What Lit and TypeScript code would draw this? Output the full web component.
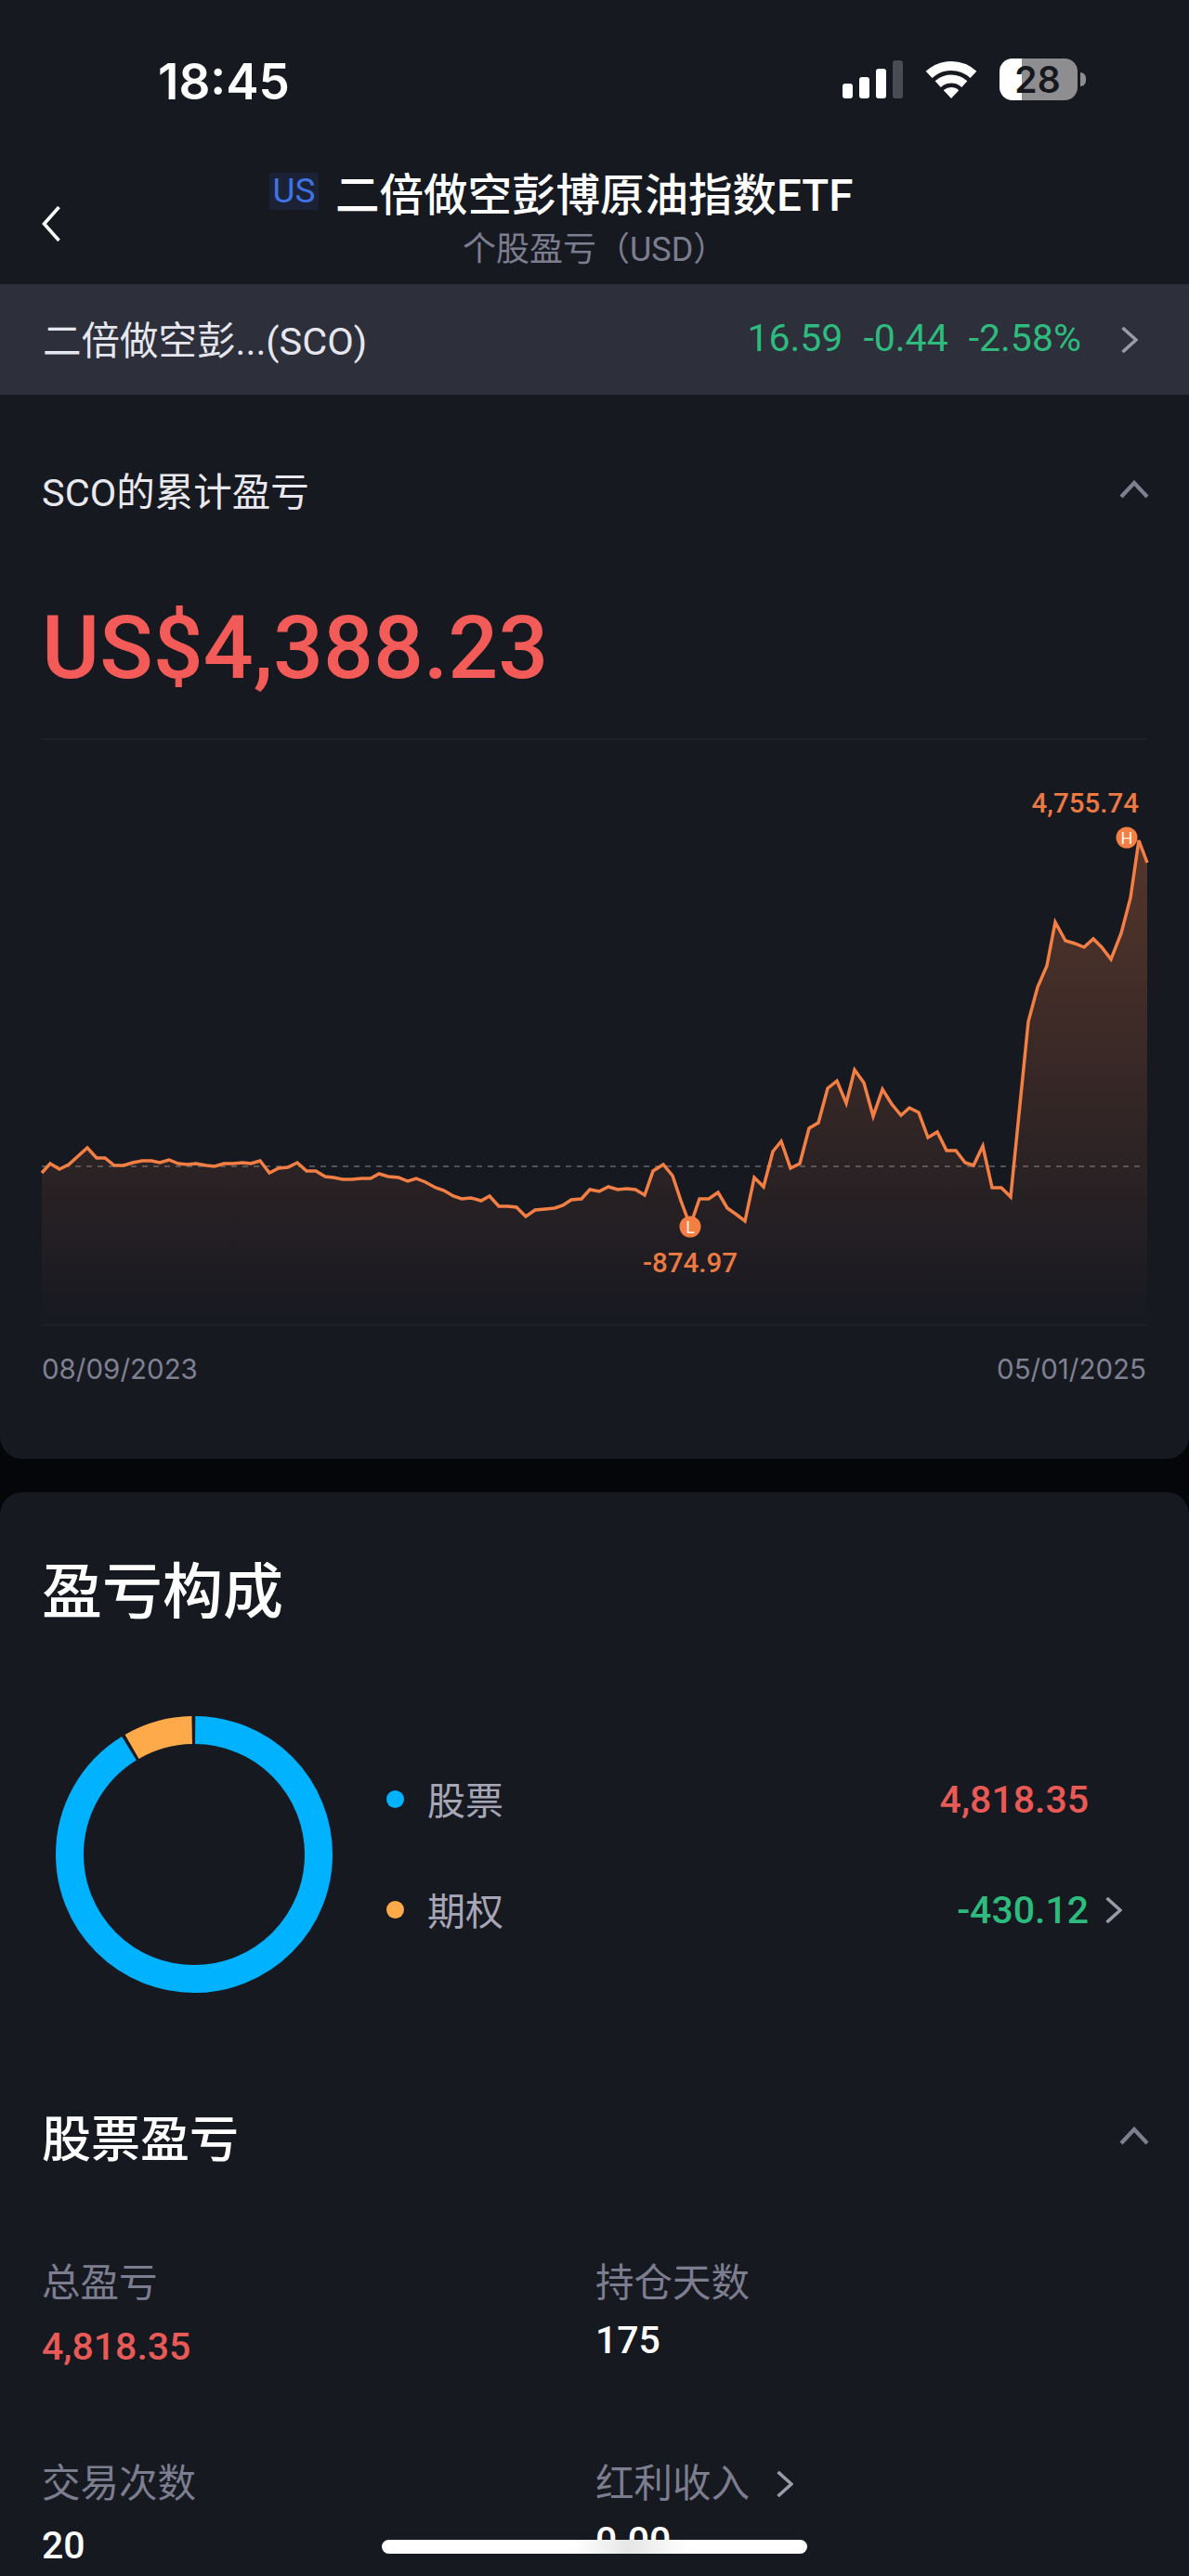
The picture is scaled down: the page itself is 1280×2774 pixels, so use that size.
import { css, html, LitElement, svg } from "lit";
import { customElement } from "lit/decorators.js";

// chart samples, in page pixels
const LINE: [number, number][] = [
  [45, 1263], [54, 1253], [64, 1259], [74, 1254], [94, 1236], [104, 1247], [113, 1247], [123, 1255],
  [133, 1255], [143, 1252], [153, 1250], [163, 1250], [172, 1252], [182, 1249], [192, 1253], [202, 1254],
  [211, 1253], [222, 1255], [231, 1256], [241, 1253], [251, 1253], [261, 1252], [270, 1253], [280, 1250],
  [290, 1263], [300, 1258], [310, 1257], [320, 1252], [330, 1261], [340, 1261], [350, 1267], [359, 1268],
  [369, 1270], [379, 1270], [389, 1269], [399, 1269], [408, 1264], [418, 1267], [429, 1268], [439, 1272],
  [448, 1269], [458, 1273], [469, 1279], [478, 1282], [488, 1288], [497, 1291], [507, 1290], [518, 1293],
  [527, 1288], [537, 1299], [547, 1299], [556, 1300], [566, 1310], [576, 1303], [587, 1302], [597, 1301],
  [606, 1298], [615, 1292], [626, 1291], [635, 1281], [645, 1283], [655, 1278], [665, 1281], [675, 1280],
  [684, 1281], [694, 1287], [703, 1261], [714, 1254], [724, 1266], [733, 1293], [743, 1320], [753, 1291],
  [763, 1291], [773, 1284], [783, 1301], [793, 1308], [802, 1315], [812, 1268], [822, 1278], [832, 1240],
  [841, 1229], [851, 1258], [861, 1253], [871, 1215], [881, 1209], [891, 1172], [901, 1164], [911, 1188],
  [920, 1152], [930, 1166], [940, 1202], [950, 1173], [960, 1189], [970, 1201], [979, 1193], [989, 1198],
  [999, 1225], [1009, 1219], [1019, 1239], [1029, 1239], [1039, 1252], [1048, 1255], [1058, 1234],
  [1068, 1279], [1078, 1279], [1088, 1289], [1102, 1150], [1107, 1100], [1117, 1063], [1127, 1040],
  [1136, 993], [1147, 1013], [1157, 1016], [1167, 1020], [1177, 1011], [1186, 1020], [1196, 1033],
  [1207, 1005], [1217, 967], [1226, 905], [1235, 929],
];

const linePoints = LINE.map(([x, y]) => `${x},${y}`).join(" ");
const areaPoints = `45,1427 ${linePoints} 1235,1427`;

const chevronRight = svg`<svg class="chev-right" viewBox="0 0 18 28"><path d="M1.5 1 16 14 1.5 27"></path></svg>`;
const chevronUp = svg`<svg class="chev-up" viewBox="0 0 32 20"><path d="M2 18 16 3 30 18"></path></svg>`;

@customElement("app-root")
export class AppRoot extends LitElement {
  static styles = css`
    * {
      box-sizing: border-box;
      margin: 0;
      padding: 0;
    }

    :host {
      display: block;
      position: relative;
      width: 1280px;
      height: 2774px;
      overflow: hidden;
      background: linear-gradient(#0c0d11, #050609 40px);
      font-family: Roboto, "Noto Sans CJK SC", sans-serif;
      color: #fff;
    }

    svg {
      display: block;
    }

    .chev-right {
      width: 18px;
      height: 28px;
      flex: none;
    }

    .chev-right path {
      fill: none;
      stroke: #9a9aa8;
      stroke-width: 3.6;
    }

    .chev-up {
      width: 32px;
      height: 20px;
      flex: none;
    }

    .chev-up path {
      fill: none;
      stroke: #7f808f;
      stroke-width: 4.2;
    }

    .top {
      background: #171921;
    }

    .status {
      height: 176px;
      padding: 63px 111px 0 170px;
      display: flex;
      align-items: flex-start;
      justify-content: space-between;
    }

    .time {
      font-family: Inter, sans-serif;
      font-weight: 600;
      font-size: 53px;
      line-height: 50px;
    }

    .status-icons {
      display: flex;
      align-items: flex-end;
      height: 45px;
    }

    .signal {
      display: flex;
      align-items: flex-end;
      gap: 7px;
      height: 41px;
      margin-bottom: 2px;
    }

    .signal i {
      display: block;
      width: 11px;
      background: #fff;
      border-radius: 3px;
    }

    .signal i.off {
      background: #4a4b55;
    }

    .wifi {
      width: 58px;
      height: 43px;
      margin-left: 23px;
      margin-bottom: 1px;
    }

    .battery {
      width: 84px;
      height: 45px;
      margin-left: 23px;
      border-radius: 14px;
      background: linear-gradient(90deg, #fff 24px, #8e8e90 24px);
      color: #17181d;
      font-family: Inter, sans-serif;
      font-weight: 600;
      font-size: 39px;
      line-height: 45px;
      text-align: center;
      padding-right: 2px;
    }

    .battery-cap {
      width: 6px;
      height: 15px;
      margin: 0 0 15px 3px;
      border-radius: 0 6px 6px 0;
      background: #8e8e90;
    }

    .nav {
      height: 130px;
      padding-left: 45px;
      display: flex;
    }

    .back {
      width: 20px;
      height: 38px;
      flex: none;
      margin-top: 46px;
    }

    .back path {
      fill: none;
      stroke: #fff;
      stroke-width: 3.6;
    }

    .nav-text {
      padding-top: 10px;
    }

    .title {
      display: flex;
      align-items: center;
      margin-left: 225px;
      height: 40px;
      font-size: 47.5px;
      font-weight: 500;
      white-space: nowrap;
    }

    .market {
      width: 53px;
      height: 40px;
      margin-right: 18px;
      background: #1b2236;
      color: #3f72e4;
      font-size: 37px;
      font-weight: 400;
      line-height: 40px;
      text-align: center;
    }

    .subtitle {
      margin: 23px 0 0 433px;
      font-size: 36px;
      line-height: 40px;
      color: #7c7d8f;
      white-space: nowrap;
    }

    .quote {
      height: 119px;
      padding: 0 55px 3px 46px;
      display: flex;
      align-items: center;
      background: #2d2f3a;
      font-size: 41.5px;
      color: #e6e6ee;
    }

    .quote-name {
      flex: 1;
    }

    .quote-values {
      display: flex;
      gap: 22px;
      font-size: 41px;
      color: #2dbb7e;
    }

    .quote .chev-right {
      margin-left: 43px;
      margin-top: 3px;
    }

    .card {
      background: #171921;
    }

    .card-chart {
      height: 1146px;
      padding-top: 72px;
      border-radius: 0 0 24px 24px;
    }

    .head {
      display: flex;
      align-items: center;
      justify-content: space-between;
      height: 60px;
      padding: 0 43px 0 45px;
    }

    .head-label {
      font-size: 41.5px;
      color: #e8e8ee;
    }

    .amount {
      margin: 86px 0 0 45px;
      font-size: 95px;
      font-weight: 500;
      line-height: 110px;
      color: #f25b58;
      white-space: nowrap;
    }

    .chart {
      width: 1280px;
      height: 660px;
      margin-top: 37px;
    }

    .chart text {
      font-family: Roboto, sans-serif;
    }

    .extreme {
      font-size: 29.5px;
      font-weight: 500;
      fill: #ec7a42;
    }

    .pin {
      font-size: 18px;
      fill: #fff3e8;
    }

    .dates {
      display: flex;
      justify-content: space-between;
      margin-top: 4px;
      padding: 0 46px 0 45px;
      font-family: Inter, sans-serif;
      font-size: 29.5px;
      line-height: 40px;
      color: #7f8092;
    }

    .card-detail {
      margin-top: 36px;
      height: 1167px;
      padding-top: 68px;
      border-radius: 24px 24px 0 0;
    }

    .card-title {
      margin-left: 45px;
      font-size: 65px;
      font-weight: 500;
      line-height: 80px;
    }

    .breakdown {
      display: flex;
      align-items: center;
      margin-top: 93px;
      padding-left: 60px;
    }

    .donut {
      width: 298px;
      height: 298px;
      flex: none;
    }

    .legend {
      width: 792px;
      margin-left: 58px;
      display: flex;
      flex-direction: column;
      gap: 69px;
    }

    .legend-row {
      display: flex;
      align-items: center;
      height: 50px;
    }

    .dot {
      width: 19px;
      height: 19px;
      border-radius: 50%;
      margin-right: 25px;
    }

    .legend-label {
      flex: 1;
      padding-bottom: 4px;
      font-size: 41px;
      color: #a6a6b6;
    }

    .legend-value {
      font-size: 41px;
      font-weight: 500;
    }

    .legend-more {
      width: 36px;
      display: flex;
      justify-content: flex-end;
    }

    .loss {
      color: #e85a55;
    }

    .gain {
      color: #2dbb7e;
    }

    .section {
      margin-top: 124px;
    }

    .section-label {
      font-size: 53px;
      font-weight: 500;
    }

    .stats {
      display: grid;
      grid-template-columns: 596px 595px;
      grid-auto-rows: 216px;
      margin-top: 107px;
      padding-left: 45px;
    }

    .stat-label {
      display: flex;
      align-items: center;
      gap: 29px;
      font-size: 41.5px;
      line-height: 44px;
      color: #7c7d8f;
    }

    .stat-value {
      margin-top: 17px;
      font-size: 41px;
      font-weight: 500;
      line-height: 44px;
    }

    .stat-value.low {
      margin-top: 24px;
    }

    .stat-value.mid {
      margin-top: 22px;
    }

    .home-bar {
      position: absolute;
      left: 411px;
      top: 2735px;
      width: 458px;
      height: 15px;
      border-radius: 8px;
      background: linear-gradient(90deg, #fff 45%, #e6e6e6 58%, #fff 72%);
    }
  `;

  private _renderStatus() {
    return html`
      <div class="status">
        <div class="time">18:45</div>
        <div class="status-icons">
          <div class="signal">
            <i style="height:16px"></i>
            <i style="height:23px"></i>
            <i style="height:32px"></i>
            <i class="off" style="height:41px"></i>
          </div>
          <svg class="wifi" viewBox="0 0 58 43">
            <path d="M5.1 16.4A35 35 0 0 1 52.9 16.4" fill="none" stroke="#fff" stroke-width="10"></path>
            <path d="M14.7 26.6A21 21 0 0 1 43.3 26.6" fill="none" stroke="#fff" stroke-width="9"></path>
            <path d="M29 42 20.8 33.2A12 12 0 0 1 37.2 33.2Z" fill="#fff"></path>
          </svg>
          <div class="battery">28</div>
          <div class="battery-cap"></div>
        </div>
      </div>
    `;
  }

  private _renderChart() {
    return html`
      <svg class="chart" viewBox="0 790 1280 660">
        <defs>
          <linearGradient id="area" gradientUnits="userSpaceOnUse" x1="0" y1="905" x2="0" y2="1427">
            <stop offset="0" stop-color="#f47f45" stop-opacity="0.28"></stop>
            <stop offset="1" stop-color="#f47f45" stop-opacity="0"></stop>
          </linearGradient>
        </defs>
        <line x1="45" y1="796" x2="1235" y2="796" stroke="#1f2129" stroke-width="2"></line>
        <line x1="45" y1="1427" x2="1235" y2="1427" stroke="#1f2129" stroke-width="2"></line>
        <line x1="45" y1="1256" x2="1231" y2="1256" stroke="#62636f" stroke-width="1.5" stroke-dasharray="6 6"></line>
        <polygon points=${areaPoints} fill="url(#area)"></polygon>
        <polyline points=${linePoints} fill="none" stroke="#f47f45" stroke-width="3.5" stroke-linejoin="miter"></polyline>

        <text class="extreme" x="1226" y="875" text-anchor="end">4,755.74</text>
        <circle cx="1213" cy="902" r="11.5" fill="#f47f45"></circle>
        <text class="pin" x="1213" y="908.5" text-anchor="middle">H</text>

        <circle cx="743" cy="1321" r="11.5" fill="#f47f45"></circle>
        <text class="pin" x="743" y="1327.5" text-anchor="middle">L</text>
        <text class="extreme" x="743" y="1370" text-anchor="middle">-874.97</text>
      </svg>
    `;
  }

  private _renderDonut() {
    return html`
      <svg class="donut" viewBox="0 0 298 298">
        <g transform="rotate(-90 149 149)" fill="none" stroke-width="30">
          <circle cx="149" cy="149" r="134" pathLength="360" stroke="#00b2ff"
            stroke-dasharray="328 32" stroke-dashoffset="-0.5"></circle>
          <circle cx="149" cy="149" r="134" pathLength="360" stroke="#ffaa4a"
            stroke-dasharray="29 331" stroke-dashoffset="-330"></circle>
        </g>
      </svg>
    `;
  }

  protected render() {
    return html`
      <div class="top">
        ${this._renderStatus()}
        <div class="nav">
          <svg class="back" viewBox="0 0 20 38"><path d="M18.5 1 2.5 19 18.5 37"></path></svg>
          <div class="nav-text">
            <div class="title"><span class="market">US</span>二倍做空彭博原油指数ETF</div>
            <div class="subtitle">个股盈亏（USD）</div>
          </div>
        </div>
      </div>

      <div class="quote">
        <div class="quote-name">二倍做空彭...(SCO)</div>
        <div class="quote-values">
          <span>16.59</span>
          <span>-0.44</span>
          <span>-2.58%</span>
        </div>
        ${chevronRight}
      </div>

      <div class="card card-chart">
        <div class="head">
          <div class="head-label">SCO的累计盈亏</div>
          ${chevronUp}
        </div>
        <div class="amount">US$4,388.23</div>
        ${this._renderChart()}
        <div class="dates">
          <span>08/09/2023</span>
          <span>05/01/2025</span>
        </div>
      </div>

      <div class="card card-detail">
        <div class="card-title">盈亏构成</div>
        <div class="breakdown">
          ${this._renderDonut()}
          <div class="legend">
            <div class="legend-row">
              <span class="dot" style="background:#00b2ff"></span>
              <span class="legend-label">股票</span>
              <span class="legend-value loss">4,818.35</span>
              <span class="legend-more"></span>
            </div>
            <div class="legend-row">
              <span class="dot" style="background:#ffaa4a"></span>
              <span class="legend-label">期权</span>
              <span class="legend-value gain">-430.12</span>
              <span class="legend-more">${chevronRight}</span>
            </div>
          </div>
        </div>

        <div class="head section">
          <div class="section-label">股票盈亏</div>
          ${chevronUp}
        </div>
        <div class="stats">
          <div>
            <div class="stat-label">总盈亏</div>
            <div class="stat-value low loss">4,818.35</div>
          </div>
          <div>
            <div class="stat-label">持仓天数</div>
            <div class="stat-value">175</div>
          </div>
          <div>
            <div class="stat-label">交易次数</div>
            <div class="stat-value mid">20</div>
          </div>
          <div>
            <div class="stat-label">红利收入 ${chevronRight}</div>
            <div class="stat-value">0.00</div>
          </div>
        </div>
      </div>

      <div class="home-bar"></div>
    `;
  }
}

declare global {
  interface HTMLElementTagNameMap {
    "app-root": AppRoot;
  }
}
